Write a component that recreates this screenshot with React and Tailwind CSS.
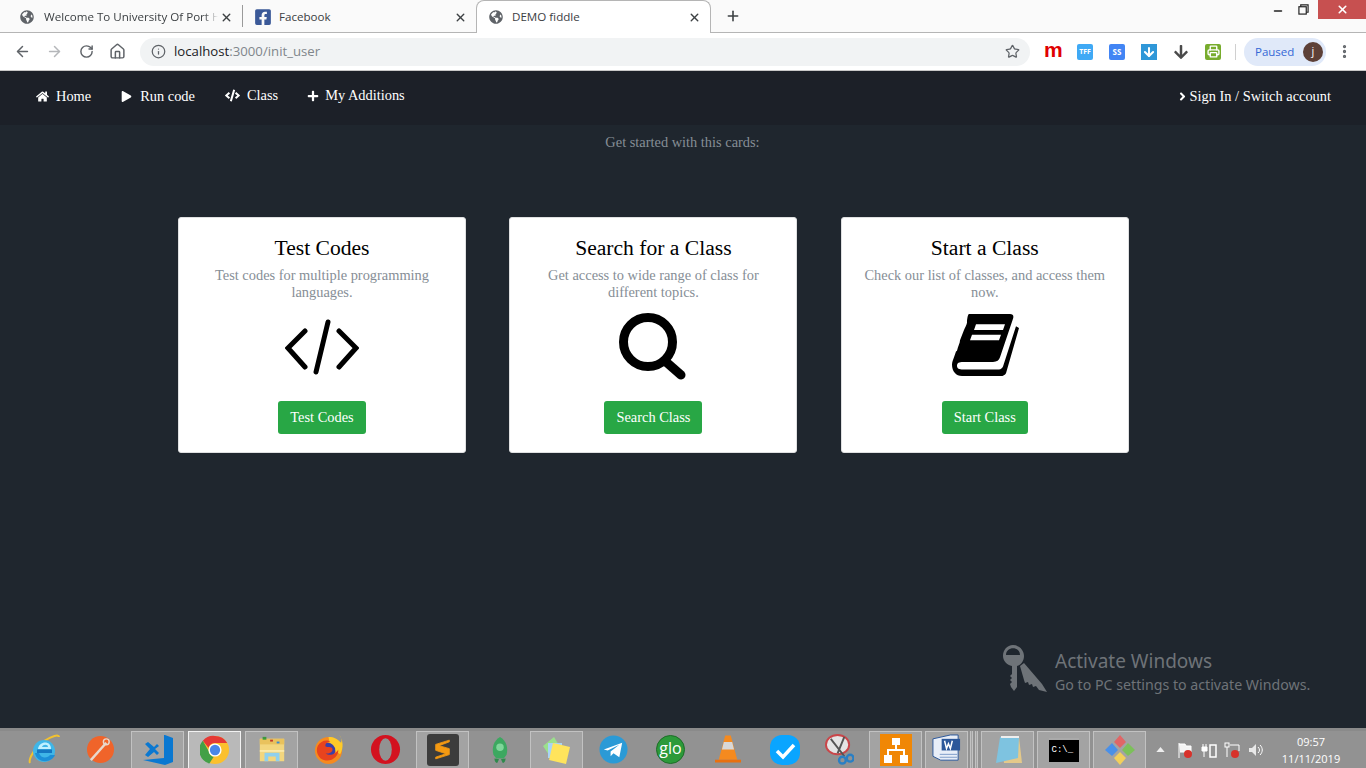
import { FaHome, FaPlay, FaPlus, FaCode, FaAngleRight, FaFacebookSquare, FaGlobeAmericas, FaArrowDown } from 'react-icons/fa'
import { ArrowLeft, ArrowRight, RotateCw, Home, Info, Star, X, Plus, Minus, MoreVertical, ArrowDown, Printer } from 'lucide-react'

function Tab({ icon, title, active, className, titleClass = '' }) {
  return (
    <div className={`flex items-center h-[33px] shrink-0 ${active ? 'pt-[1px] bg-white rounded-t-lg border border-b-0 border-[#b5b5b5]' : 'pt-[2px]'} ${className}`}>
      {icon}
      <span className={`flex-1 overflow-hidden whitespace-nowrap text-[11.6px] text-[#3c4043] ${titleClass}`}>{title}</span>
      <X size={13} strokeWidth={2.6} className="text-[#3c4043] shrink-0" />
    </div>
  )
}

function TabBar() {
  return (
    <div className="flex items-center h-[33px] bg-[#fafafa] border-b border-[#b5b5b5] font-['Open_Sans',sans-serif]">
      <Tab
        className="w-[236px] pl-[20px] pr-[3px]"
        title="Welcome To University Of Port H"
        titleClass="mr-[2px] [mask-image:linear-gradient(to_left,transparent,black_14px)]"
        icon={<FaGlobeAmericas size={14} className="text-[#5f6368] mr-[10px] shrink-0" />}
      />
      <div className="w-px h-[22px] bg-[#9a9a9a] ml-[6px]" />
      <Tab
        className="w-[227px] pl-[11px] pr-[3px]"
        title="Facebook"
        icon={<FaFacebookSquare size={18} className="text-[#3b5998] mr-[7px] shrink-0" />}
      />
      <Tab
        active
        className="w-[235px] ml-[6px] pl-[12px] pr-[9px]"
        title="DEMO fiddle"
        icon={<FaGlobeAmericas size={14} className="text-[#5f6368] mr-[9px] shrink-0" />}
      />
      <Plus size={16} strokeWidth={2.4} className="ml-[14px] text-[#3c4043]" />
      <div className="flex-1" />
      <div className="flex items-start self-start h-[20px]">
        <Minus size={12} strokeWidth={3} className="mt-[5px] text-[#222] mr-[14px]" />
        <svg viewBox="0 0 12 12" className="w-[11px] h-[11px] mt-[4px] mr-[9px]" fill="none" stroke="#222" strokeWidth="1.3">
          <rect x="1" y="3" width="8" height="8" />
          <path d="M3 3V1h8v8H9" />
        </svg>
        <div className="w-[48px] h-[19px] bg-[#c75050] flex items-center justify-center">
          <X size={13} strokeWidth={3} className="text-white" />
        </div>
      </div>
    </div>
  )
}

function ExtIcon({ className, children }) {
  return <div className={`w-[16px] h-[16px] flex items-center justify-center rounded-[2px] text-white text-[7px] font-bold leading-none ${className}`}>{children}</div>
}

function Toolbar() {
  return (
    <div className="flex items-center h-[37px] bg-white pl-[14px] pr-[13px]">
      <ArrowLeft size={17} strokeWidth={2.1} className="text-[#5f6368]" />
      <ArrowRight size={17} strokeWidth={2.1} className="text-[#b5b7ba] ml-[15px]" />
      <RotateCw size={15} strokeWidth={2.3} className="text-[#5f6368] ml-[16px]" />
      <Home size={17} strokeWidth={2.1} className="text-[#5f6368] ml-[15px]" />
      <div className="flex items-center h-[28px] w-[890px] ml-[14px] pl-[11px] pr-[10px] rounded-full bg-[#f1f3f4]">
        <Info size={15} strokeWidth={2} className="text-[#5f6368]" />
        <span className="ml-[8px] text-[13.2px] text-[#202124] font-['Open_Sans',sans-serif]">
          localhost<span className="text-[#80868b]">:3000/init_user</span>
        </span>
        <Star size={15} strokeWidth={2} className="ml-auto text-[#5f6368]" />
      </div>
      <div className="flex items-center ml-[14px] gap-[16px]">
        <span className="w-[16px] mr-px text-center text-[#e00000] text-[21px] leading-none font-bold font-['Liberation_Sans',sans-serif] -mt-[5px]">m</span>
        <ExtIcon className="bg-[#3fa9f5]">TFF</ExtIcon>
        <ExtIcon className="bg-[#4285f4]"><span className="text-[8px]">SS</span></ExtIcon>
        <ExtIcon className="bg-[#2f97d8] rounded-none"><ArrowDown size={14} strokeWidth={3.5} /></ExtIcon>
        <FaArrowDown size={16} className="text-[#4a4a4a]" />
        <ExtIcon className="bg-[#78ac2d]"><Printer size={13} strokeWidth={2.6} /></ExtIcon>
      </div>
      <div className="w-px h-[16px] bg-[#d0d0d0] ml-[14px]" />
      <div className="flex items-center justify-between w-[82px] h-[28px] ml-[8px] pl-[11px] pr-[3px] rounded-full bg-[#e0e9f9] font-['Open_Sans',sans-serif]">
        <span className="text-[11.5px] text-[#3367d6]">Paused</span>
        <span className="w-[20px] h-[20px] rounded-full bg-[#5d4037] text-white text-[11px] flex items-center justify-center">j</span>
      </div>
      <MoreVertical size={17} strokeWidth={2.6} className="text-[#5f6368] ml-[10px]" />
    </div>
  )
}

function NavLink({ icon, label, className }) {
  return (
    <a className={`flex items-center text-white text-[14.4px] ${className}`}>
      {icon}
      {label}
    </a>
  )
}

function Navbar() {
  return (
    <nav className="flex items-center h-[55px] bg-[#1c2028] border-t border-[#c8c8c8] pl-[36px] pr-[35px] pb-[4px] font-['Liberation_Serif',serif]">
      <NavLink icon={<FaHome size={13} className="mr-[7px]" />} label="Home" className="mt-[1px]" />
      <NavLink icon={<FaPlay size={11} className="mr-[8px]" />} label="Run code" className="ml-[30px] mt-[1px]" />
      <NavLink icon={<FaCode size={15} className="mr-[7px]" />} label="Class" className="ml-[30px]" />
      <NavLink icon={<FaPlus size={12} className="mr-[6px]" />} label="My Additions" className="ml-[29px]" />
      <NavLink icon={<FaAngleRight size={13} className="mr-[1px]" />} label="Sign In / Switch account" className="ml-auto mt-[1px]" />
    </nav>
  )
}

function CodeGlyph() {
  return (
    <svg viewBox="0 0 74 56" className="w-[74px] h-[56px]" fill="none" stroke="#000" strokeWidth="5" strokeLinecap="round">
      <path d="M20 12 3 29l17 19" />
      <path d="M54 12l17 17-17 19" />
      <path d="M43 3 31 53" />
    </svg>
  )
}

function SearchGlyph() {
  return (
    <svg viewBox="0 0 68 68" className="w-[68px] h-[68px]" fill="none" stroke="#000">
      <circle cx="29" cy="29" r="24.5" strokeWidth="9" />
      <path d="M46 48 62 62" strokeWidth="9" strokeLinecap="round" />
    </svg>
  )
}

function BookGlyph() {
  return (
    <svg viewBox="0 -1 68 66" preserveAspectRatio="none" className="w-[68px] h-[62px] -mt-[5px]">
      <path
        fillRule="evenodd"
        d="M18 1h41c3 0 4 2 3 5L49 47c-1 3-3 5-7 5H12c-4 0-6 1-6 4s2 4 6 4h36c2 0 3-1 4-3l13-43 3 2-13 48c-1 2-3 3-5 3H11C5 67 1 62 1 55c0-3 1-5 2-8l2-6 1-1c1-5 3-8 3-11l4-11c1-3 3-6 3-8 0-4 1-9 2-9z"
        transform="translate(0 -2)"
      />
      <path fill="#fff" d="M25 10h29l-2 6H23zM21 21h29l-2 6H19z" />
    </svg>
  )
}

function Card({ title, text, glyph, button }) {
  return (
    <div className="w-[288px] h-[236px] bg-white rounded-[3px] border border-[#dfe0e1] flex flex-col items-center pt-[15px] px-[20px] text-center font-['Liberation_Serif',serif]">
      <h5 className="text-[21.6px] leading-[30px] text-black">{title}</h5>
      <p className="mt-[4px] text-[14.4px] leading-[17px] text-[#868e96]">{text}</p>
      <div className="h-[70px] mt-[11px] flex items-center justify-center">{glyph}</div>
      <button className="mt-[19px] h-[33px] px-[12px] bg-[#28a745] rounded-[3px] text-white text-[14.4px]">{button}</button>
    </div>
  )
}

function TaskButton({ framed, pressed, className = 'mx-[2px]', children }) {
  return (
    <div
      className={`flex items-center justify-center w-[53px] h-[38px] shrink-0 border ${
        pressed ? 'bg-[#b9b9b9] border-[#f2f2f2]' : framed ? 'bg-[#a3a3a3] border-[#c2c2c2]' : 'border-transparent'
      } ${className}`}
    >
      {children}
    </div>
  )
}

function Taskbar() {
  return (
    <div className="flex items-center h-[40px] bg-[#929292] border-t-[3px] border-[#8a8a8a] pl-[15px] font-['Open_Sans',sans-serif]">
      <TaskButton>
        <svg viewBox="0 0 32 32" className="w-[32px] h-[32px]">
          <path d="M2 29c-2-4 6-17 14-22C24 2 31 0 31 3" fill="none" stroke="#f2c230" strokeWidth="2" />
          <circle cx="16" cy="17" r="11" fill="#3fb6e8" />
          <path d="M10 15h13c0-9-12-8-13 0zM14 13c1-3 6-3 6 0z" fill="#bff0ff" />
          <rect x="9" y="15.5" width="15" height="3.5" fill="#1577c2" />
          <path d="M11 19c2 6 9 5 11 2h5c-3 8-18 9-20-2z" fill="#1c8fd8" />
        </svg>
      </TaskButton>
      <TaskButton>
        <svg viewBox="0 0 30 30" className="w-[29px] h-[29px]">
          <circle cx="15" cy="15" r="14" fill="#f0642a" />
          <path d="M5 26 21 8" stroke="#e8d8cc" strokeWidth="2.5" />
          <circle cx="21" cy="7" r="3" fill="none" stroke="#e8d8cc" strokeWidth="1.5" />
        </svg>
      </TaskButton>
      <TaskButton framed>
        <svg viewBox="0 0 32 32" className="w-[32px] h-[32px]">
          <path d="M23 1 31 4v24l-8 3L1 26l21-2V1zM6 8l6 5 3-3 2 2-4 3 4 4-2 2-3-3-6 5-3-2 5-6-5-5z" fill="#0a78d1" />
        </svg>
      </TaskButton>
      <TaskButton pressed>
        <svg viewBox="0 0 32 32" className="w-[30px] h-[30px]">
          <circle cx="16" cy="16" r="15" fill="#fbc02d" />
          <path d="M16 1a15 15 0 0 1 13 7.500H16a7.500 7.500 0 0 0-7 5L3 6a15 15 0 0 1 13-5z" fill="#e53935" />
          <path d="M3 6l6.500 11.500a7.500 7.500 0 0 0 5 6L10 30.500A15 15 0 0 1 3 6z" fill="#43a047" />
          <circle cx="16" cy="16" r="7" fill="#fff" />
          <circle cx="16" cy="16" r="5.500" fill="#4a86e8" />
        </svg>
      </TaskButton>
      <TaskButton framed>
        <svg viewBox="0 0 32 32" className="w-[30px] h-[30px]">
          <path d="M3 4h26v24H3z" fill="#f3d67e" />
          <path d="M3 4h26v6H3z" fill="#e9c25d" />
          <rect x="6" y="2" width="4" height="3" fill="#3c9a3c" />
          <rect x="14" y="5" width="3" height="2" fill="#c43c2c" />
          <rect x="21" y="7" width="3" height="2" fill="#3c8cd0" />
          <path d="M8 28v-9h16v9h-4v-5h-8v5z" fill="#8fd0ee" />
          <path d="M3 16h26v2H3z" fill="#fbe9a8" />
        </svg>
      </TaskButton>
      <TaskButton>
        <svg viewBox="0 0 32 32" className="w-[31px] h-[31px]">
          <circle cx="16" cy="17" r="14" fill="#f68a1e" />
          <path d="M16 3c6 0 9 2 13 6 1-3 0-6-2-8 4 5 5 13 1 20L18 14z" fill="#ffca28" />
          <circle cx="15" cy="17" r="8" fill="#3b3fa8" />
          <path d="M5 12c3-5 9-7 13-4-3 0-6 2-5 5 2 1 6 0 7 2 1 4-4 6-7 5 4 3 11 1 13-4 1 7-7 13-14 11C6 26 2 18 5 12z" fill="#e8431e" />
        </svg>
      </TaskButton>
      <TaskButton>
        <svg viewBox="0 0 32 32" className="w-[31px] h-[31px]">
          <circle cx="16" cy="16" r="15" fill="#d3121f" />
          <ellipse cx="16" cy="16" rx="6.500" ry="11.500" fill="#929292" />
        </svg>
      </TaskButton>
      <TaskButton framed>
        <div className="w-[32px] h-[32px] rounded-[3px] bg-[#3c3c3c] flex items-center justify-center">
          <svg viewBox="0 0 20 24" className="w-[17px] h-[21px]">
            <path d="M18 1 2 6v7l12 4-12 4v2l16-5v-7L6 7.500 18 3z" fill="#f59a12" stroke="#f59a12" />
          </svg>
        </div>
      </TaskButton>
      <TaskButton>
        <svg viewBox="0 0 30 32" className="w-[28px] h-[30px]">
          <path d="M15 2c7 4 9 12 7 19l-3 4h-8l-3-4C6 14 8 6 15 2z" fill="#3ca860" />
          <circle cx="15" cy="13" r="4" fill="#7fd69a" />
          <path d="M9 25c0 3 2 5 3 5l2-4zM21 25c0 3-2 5-3 5l-2-4z" fill="#2f8a4c" />
        </svg>
      </TaskButton>
      <TaskButton framed>
        <svg viewBox="0 0 32 32" className="w-[32px] h-[32px]">
          <path d="M2 12 13 3l6 10-9 11z" fill="#9be08c" />
          <rect x="7" y="9" width="14" height="15" fill="#a9d4f5" />
          <path d="M12 9l17 4-4 17-17-4z" fill="#ffe45c" />
        </svg>
      </TaskButton>
      <TaskButton>
        <svg viewBox="0 0 30 30" className="w-[29px] h-[29px]">
          <circle cx="15" cy="15" r="14.500" fill="#2b9ad6" />
          <path d="M5 15 24 8l-3 15-6-4-3 3v-5l9-7-12 6z" fill="#fff" />
        </svg>
      </TaskButton>
      <TaskButton>
        <div className="w-[29px] h-[29px] rounded-full bg-[#2c9a3a] border border-[#1d6d28] flex items-center justify-center text-white text-[16px] leading-none pb-[3px]">glo</div>
      </TaskButton>
      <TaskButton>
        <svg viewBox="0 0 28 32" className="w-[26px] h-[31px]">
          <path d="M11 1h6l7 26H4z" fill="#f58a1f" />
          <path d="M9.500 8h9l2 8H7.500z" fill="#d8d8d8" />
          <path d="M0 27h28v3H0z" fill="#e9700f" />
        </svg>
      </TaskButton>
      <TaskButton>
        <svg viewBox="0 0 32 32" className="w-[32px] h-[32px]">
          <rect x="1" y="1" width="30" height="30" rx="12" fill="#0aa5ff" />
          <path d="M8 17l6 6 11-12" fill="none" stroke="#fff" strokeWidth="3.500" />
        </svg>
      </TaskButton>
      <TaskButton className="mr-[2px]">
        <svg viewBox="0 0 30 32" className="w-[29px] h-[31px]">
          <ellipse cx="13" cy="11" rx="12" ry="10" fill="#e4e4e4" stroke="#c9464a" strokeWidth="2" />
          <path d="M6 5 20 23M20 3 13 20" stroke="#555" strokeWidth="2" />
          <circle cx="18" cy="27" r="3.500" fill="none" stroke="#2a7fc4" strokeWidth="2.500" />
          <circle cx="26" cy="25" r="3.500" fill="none" stroke="#2a7fc4" strokeWidth="2.500" />
        </svg>
      </TaskButton>
      <TaskButton framed className="ml-[1px] mr-[2px]">
        <svg viewBox="0 0 32 32" className="w-[32px] h-[32px]">
          <rect width="32" height="32" fill="#f08705" />
          <path d="M12 4h8v7h-3v4h8v6h3v8h-8v-8h3v-4H9v4h3v8H4v-8h3v-6h8v-4h-3z" fill="#fff" />
        </svg>
      </TaskButton>
      <TaskButton framed className="ml-[1px] mr-[2px] w-[43px]!">
        <svg viewBox="0 0 32 32" className="w-[31px] h-[31px]">
          <path d="M2 5 20 1h8v26H10L2 23z" fill="#e8eef8" stroke="#2b579a" />
          <rect x="11" y="5" width="19" height="12" fill="#2b579a" />
          <path d="M14 7l2 8 2-5 2 5 2-8" fill="none" stroke="#fff" strokeWidth="1.500" />
          <path d="M9 21h18M9 24h18" stroke="#7d9cc8" />
        </svg>
      </TaskButton>
      <div className="w-[3px] h-[38px] bg-[#a3a3a3] border-x border-[#c2c2c2]" />
      <div className="w-[3px] h-[38px] ml-[2px] bg-[#a3a3a3] border-x border-[#c2c2c2]" />
      <TaskButton framed className="ml-[3px] mr-[3px]">
        <svg viewBox="0 0 32 32" className="w-[32px] h-[32px]">
          <path d="M9 3h18l3 26H12z" fill="#e4c98a" />
          <path d="M8 3h19l-1 21-22 5z" fill="#7ec3e0" />
          <path d="M9 2h18v2H9z" fill="#eee" />
        </svg>
      </TaskButton>
      <TaskButton framed className="mr-[3px]">
        <div className="w-[30px] h-[24px] bg-black border-t-2 border-[#aaa] text-white text-[9px] leading-[20px] font-['Liberation_Mono',monospace] pl-[3px]">C:\_</div>
      </TaskButton>
      <TaskButton framed className="">
        <svg viewBox="0 0 32 32" className="w-[32px] h-[32px]">
          <path d="M16 1l6 7-6 6-6-6z" fill="#e06666" />
          <path d="M24 9l7 7-7 6-6-6z" fill="#7cc05a" />
          <path d="M8 9l6 7-6 6-7-6z" fill="#4a90e8" />
          <path d="M16 18l6 6-6 7-6-7z" fill="#f2cf5b" />
        </svg>
      </TaskButton>
      <div className="flex items-center ml-[10px] flex-1">
        <svg viewBox="0 0 10 6" className="w-[9px] h-[5px]"><path d="M5 0l5 6H0z" fill="#eee" /></svg>
        <svg viewBox="0 0 16 16" className="w-[16px] h-[16px] ml-[12px]">
          <path d="M2 1v15M2 2h6l1 2h5v6H3" fill="#f4f4f4" stroke="#fff" />
          <circle cx="11" cy="12" r="4" fill="#d8322b" />
        </svg>
        <svg viewBox="0 0 16 16" className="w-[16px] h-[16px] ml-[8px]">
          <path d="M2 2v3M5 2v3M1 5h5v4H1zM3 9v6" stroke="#fff" fill="#fff" />
          <rect x="9" y="3" width="6" height="12" fill="none" stroke="#fff" strokeWidth="1.500" />
        </svg>
        <svg viewBox="0 0 16 16" className="w-[16px] h-[16px] ml-[7px]">
          <rect x="1" y="1" width="4" height="4" fill="none" stroke="#fff" />
          <path d="M3 5v10M6 3h9v6" fill="none" stroke="#fff" />
          <circle cx="11" cy="12" r="4" fill="#d8322b" />
        </svg>
        <svg viewBox="0 0 16 16" className="w-[16px] h-[16px] ml-[8px]">
          <path d="M1 6h3l4-4v12l-4-4H1z" fill="#e8e8e8" />
          <path d="M10 5c2 2 2 4 0 6M12 3c3 3 3 7 0 10" fill="none" stroke="#fff" />
        </svg>
        <div className="flex-1 text-center text-[11px] leading-[17px] text-white pr-[8px]">
          <div>09:57</div>
          <div className="whitespace-nowrap">11/11/2019</div>
        </div>
      </div>
    </div>
  )
}

function ActivateNotice() {
  return (
    <div className="absolute left-[1002px] top-[520px] flex items-start text-[#6e7378] font-['Noto_Sans',sans-serif]">
      <svg viewBox="0 0 46 50" className="w-[46px] h-[50px]" fill="#6e7378">
        <path fillRule="evenodd" d="M11 0c6 0 11 5 11 11 0 5-3 9-7 10v21l-3 4-3-4-1-3 2-2-2-2 2-2-2-2 2-2v-8C5 20 1 16 1 11 1 5 5 0 11 0zM4 10h14c0-9-14-9-14 0z" />
        <path d="M18 21l4-3 18 21 5 8-8-2-3-4-3 1-1-3-3 1-1-3-3 1-1-3z" />
      </svg>
      <div className="ml-[7px] mt-[3px]">
        <div className="text-[19px] leading-[27px]">Activate Windows</div>
        <div className="text-[14.2px] leading-[19px] whitespace-nowrap">Go to PC settings to activate Windows.</div>
      </div>
    </div>
  )
}

export default function App() {
  return (
    <div className="h-screen flex flex-col overflow-hidden bg-[#1f262e]">
      <TabBar />
      <Toolbar />
      <Navbar />
      <main className="relative flex-1 font-['Liberation_Serif',serif]">
        <p className="mt-[9px] text-center text-[14.4px] leading-[17px] text-[#868e96] pr-px">Get started with this cards:</p>
        <div className="flex gap-[43.4px] ml-[178px] mt-[66px]">
          <Card
            title="Test Codes"
            text="Test codes for multiple programming languages."
            glyph={<CodeGlyph />}
            button="Test Codes"
          />
          <Card
            title="Search for a Class"
            text="Get access to wide range of class for different topics."
            glyph={<SearchGlyph />}
            button="Search Class"
          />
          <Card
            title="Start a Class"
            text="Check our list of classes, and access them now."
            glyph={<BookGlyph />}
            button="Start Class"
          />
        </div>
        <ActivateNotice />
      </main>
      <Taskbar />
    </div>
  )
}
